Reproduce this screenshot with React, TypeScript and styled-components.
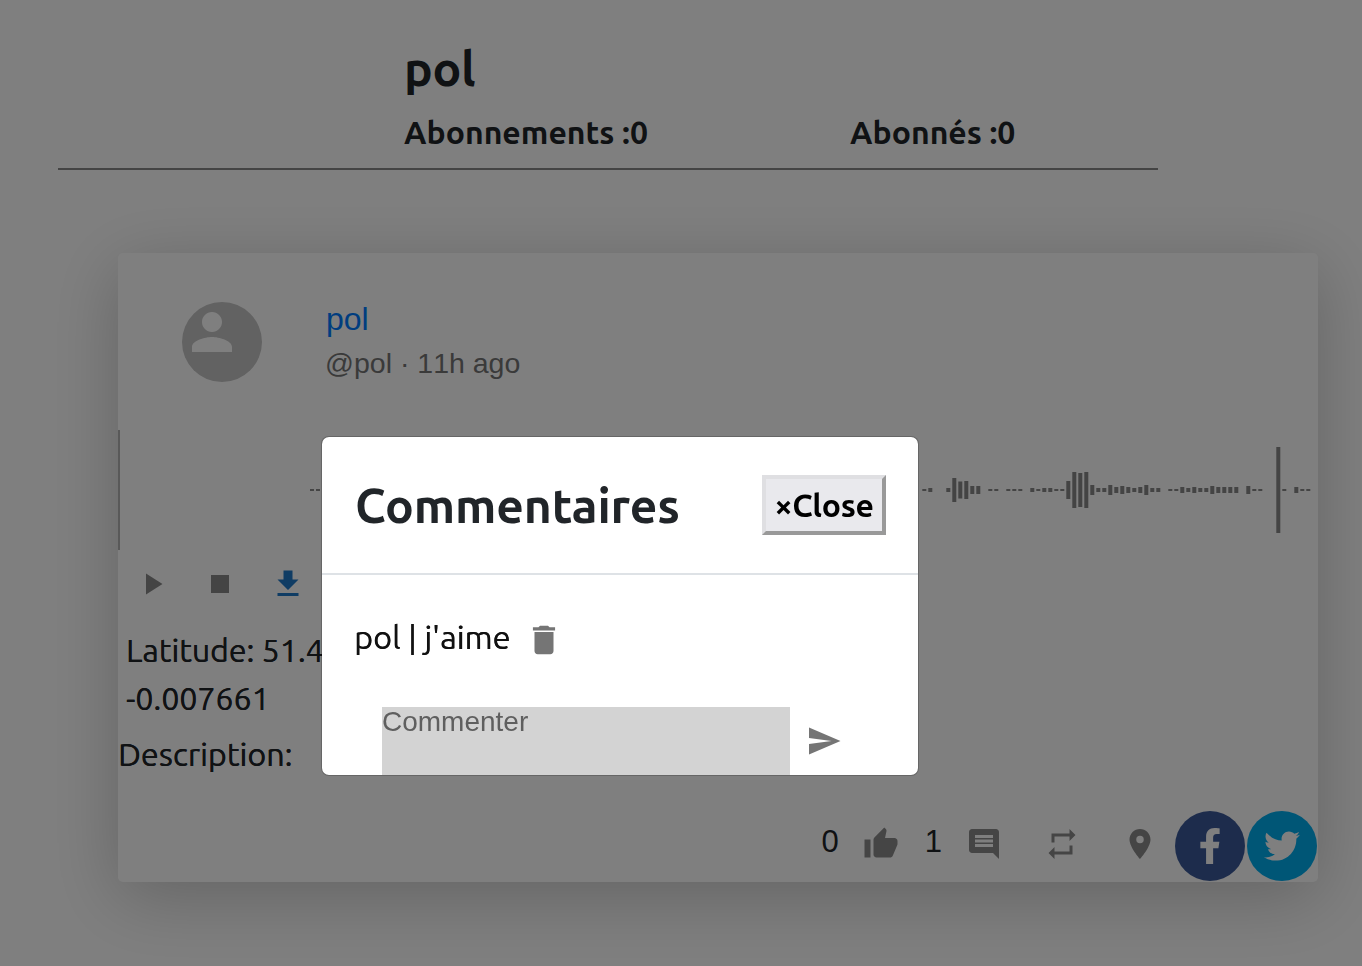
import React from 'react';
import styled, { createGlobalStyle } from 'styled-components';
import { MdPlayArrow, MdStop, MdGetApp, MdPerson, MdDelete, MdSend, MdThumbUp, MdComment, MdRepeat, MdPlace } from 'react-icons/md';
import { FaFacebookF, FaTwitter } from 'react-icons/fa';

const UI = `Ubuntu, "Noto Sans", sans-serif`;
const SANS = `"Liberation Sans", Arial, sans-serif`;
const SEMI = `0.3px 0 0 currentColor`;

const Global = createGlobalStyle`
  html, body { margin: 0; padding: 0; background: #fff; overflow: hidden; height: 966px; }
  * { box-sizing: border-box; }
  body { font-family: ${UI}; color: #212529; }
`;

const Page = styled.div`
  width: 1362px;
  height: 966px;
  padding-top: 38px;
`;
const Profile = styled.header`
  margin-left: 58px;
  width: 1100px;
  height: 132px;
  padding-left: 346px;
  border-bottom: 2px solid #888;
`;
const UserName = styled.h1`
  margin: 0;
  font-size: 48px;
  line-height: 60px;
  font-weight: 700;
  letter-spacing: -0.3px;
`;
const Stats = styled.div`
  display: flex;
  margin-top: 7px;
`;
const Stat = styled.div`
  flex: 0 0 446px;
  font-size: 32px;
  line-height: 54px;
  font-weight: 700;
  height: 54px;
`;
const Card = styled.article`
  margin: 83px 0 0 118px;
  width: 1200px;
  height: 629px;
  background: #fff;
  border-radius: 5px;
  box-shadow: 0 15px 70px rgba(0, 0, 0, 0.22);
  position: relative;
`;
const CardHead = styled.div`
  display: flex;
  padding: 49px 0 0 64px;
  height: 177px;
`;
const Avatar = styled.div`
  width: 80px;
  height: 80px;
  border-radius: 50%;
  background: #c4c4c4;
  color: #fff;
  font-size: 60px;
  svg { display: block; }
`;
const Meta = styled.div`
  margin: -1px 0 0 64px;
  font-family: ${SANS};
`;
const AuthorLink = styled.a`
  display: block;
  color: #007bff;
  font-size: 32px;
  line-height: 36px;
`;
const Sub = styled.div`
  margin: 8px 0 0 -1px;
  color: #757575;
  font-size: 28.5px;
  line-height: 36px;
  font-kerning: none;
`;
const Wave = styled.div`
  height: 120px;
  border-left: 2px solid rgba(0, 0, 0, 0.3);
  svg { display: block; }
`;
const Controls = styled.div`
  display: flex;
  margin-top: 16px;
`;
const CtrlBtn = styled.span<{ $blue?: boolean }>`
  width: 68px;
  height: 36px;
  font-size: 36px;
  display: flex;
  justify-content: center;
  color: ${(p) => (p.$blue ? '#1f78c8' : '#888')};
`;
const Location = styled.p`
  margin: 24px 0 0 8px;
  font-size: 32px;
  line-height: 48px;
  text-shadow: ${SEMI};
`;
const Description = styled.p`
  margin: 8px 0 0;
  font-size: 32.3px;
  line-height: 48px;
  text-shadow: ${SEMI};
`;
const Footer = styled.div`
  position: absolute;
  right: 1px;
  bottom: 1px;
  display: flex;
  align-items: center;
  height: 70px;
`;
const Count = styled.span<{ $left?: number }>`
  font-family: ${SANS};
  font-size: 31px;
  line-height: 36px;
  margin-top: -9px;
  margin-left: ${(p) => p.$left ?? 0}px;
`;
const Action = styled.span<{ $left: number }>`
  margin-left: ${(p) => p.$left}px;
  font-size: 36px;
  width: 36px;
  height: 36px;
  color: #8b8b8b;
  display: flex;
  margin-top: -4px;
`;
const Social = styled.span<{ $bg: string; $gap: number }>`
  margin-left: ${(p) => p.$gap}px;
  width: 70px;
  height: 70px;
  border-radius: 50%;
  background: ${(p) => p.$bg};
  color: #fff;
  display: flex;
  align-items: center;
  justify-content: center;
  font-size: 36px;
`;
const Overlay = styled.div`
  position: fixed;
  inset: 0;
  background: rgba(0, 0, 0, 0.5);
`;
const Modal = styled.section`
  position: fixed;
  left: 321px;
  top: 436px;
  width: 598px;
  height: 340px;
  background: #fff;
  border: 1px solid rgba(0, 0, 0, 0.2);
  border-radius: 8px;
  overflow: hidden;
  background-clip: padding-box;
`;
const ModalHead = styled.div`
  display: flex;
  justify-content: space-between;
  align-items: center;
  height: 138px;
  padding: 0 32px 0 33px;
  border-bottom: 2px solid #dee2e6;
`;
const ModalTitle = styled.h2`
  margin: 0;
  font-size: 48px;
  font-weight: 700;
  line-height: 54px;
  letter-spacing: -0.15px;
`;
const CloseBtn = styled.button`
  width: 124px;
  height: 60px;
  padding: 0;
  background: #e9e9ed;
  border-style: solid;
  border-width: 4px;
  border-color: #dfdfe2 #999 #999 #dfdfe2;
  font-family: ${UI};
  font-size: 32px;
  font-weight: 700;
  letter-spacing: -0.3px;
  color: #000;
`;
const ModalBody = styled.div`
  padding: 42px 0 0 32px;
`;
const CommentRow = styled.div`
  display: flex;
  align-items: center;
  font-size: 32.5px;
  line-height: 40px;
  height: 40px;
  color: #111;
  text-shadow: ${SEMI};
`;
const Trash = styled.span`
  margin-left: 14px;
  font-size: 38px;
  width: 38px;
  height: 38px;
  display: flex;
  color: #757575;
  margin-top: 5px;
`;
const Composer = styled.div`
  display: flex;
  margin: 50px 0 0 28px;
`;
const Input = styled.textarea`
  width: 408px;
  height: 80px;
  padding: 0;
  border: none;
  background: #d3d3d3;
  font-family: ${SANS};
  font-size: 28px;
  line-height: 30px;
  resize: none;
  &::placeholder { color: #5f5f5f; opacity: 1; }
`;
const SendBtn = styled.span`
  margin: 16px 0 0 16px;
  font-size: 36px;
  width: 36px;
  height: 36px;
  display: flex;
  color: #757575;
`;

const BARS: [number, number][] = [
  [0, 2], [1, 4], [4, 4], [5, 24], [6, 17], [7, 18], [8, 8], [9, 8], [11, 2], [12, 2], [14, 2], [15, 2], [16, 2],
  [18, 4], [19, 2], [20, 4], [21, 4], [22, 2], [23, 2], [24, 18], [25, 36], [26, 34], [27, 36], [28, 10], [29, 4], [30, 4],
  [31, 10], [32, 6], [33, 8], [34, 6], [35, 4], [36, 6], [37, 10], [38, 4], [39, 4], [41, 2], [42, 2], [43, 6], [44, 4],
  [45, 6], [46, 4], [47, 4], [48, 8], [49, 6], [50, 6], [51, 6], [52, 6], [54, 8], [55, 2], [56, 2], [59, 86], [60, 2],
  [62, 6], [63, 2], [64, 2],
];

function WaveForm() {
  const base = 922.3 - 120;
  return (
    <svg width="1198" height="120" viewBox="0 0 1198 120" fill="#888">
      <rect x="190" y="59" width="4" height="2" />
      <rect x="196" y="59" width="4" height="2" />
      {BARS.map(([i, h]) => (
        <rect key={i} x={base + i * 6} y={60 - h / 2} width="4" height={h} />
      ))}
    </svg>
  );
}

export default function App() {
  return (
    <>
      <Global />
      <Page>
        <Profile>
          <UserName>pol</UserName>
          <Stats>
            <Stat>Abonnements :0</Stat>
            <Stat>Abonnés :0</Stat>
          </Stats>
        </Profile>
        <Card>
          <CardHead>
            <Avatar><MdPerson /></Avatar>
            <Meta>
              <AuthorLink>pol</AuthorLink>
              <Sub>@pol · 11h ago</Sub>
            </Meta>
          </CardHead>
          <Wave><WaveForm /></Wave>
          <Controls>
            <CtrlBtn><MdPlayArrow /></CtrlBtn>
            <CtrlBtn><MdStop /></CtrlBtn>
            <CtrlBtn $blue><MdGetApp /></CtrlBtn>
          </Controls>
          <Location>Latitude: 51.47<br />-0.007661</Location>
          <Description>Description:</Description>
          <Footer>
            <Count>0</Count>
            <Action $left={24}><MdThumbUp /></Action>
            <Count $left={26}>1</Count>
            <Action $left={24}><MdComment /></Action>
            <Action $left={42}><MdRepeat /></Action>
            <Action $left={42}><MdPlace /></Action>
            <Social $bg="#3b5998" $gap={17}><FaFacebookF /></Social>
            <Social $bg="#00aced" $gap={2}><FaTwitter /></Social>
          </Footer>
        </Card>
      </Page>
      <Overlay />
      <Modal>
        <ModalHead>
          <ModalTitle>Commentaires</ModalTitle>
          <CloseBtn>×Close</CloseBtn>
        </ModalHead>
        <ModalBody>
          <CommentRow>
            pol | j'aime
            <Trash><MdDelete /></Trash>
          </CommentRow>
          <Composer>
            <Input placeholder="Commenter" />
            <SendBtn><MdSend /></SendBtn>
          </Composer>
        </ModalBody>
      </Modal>
    </>
  );
}
